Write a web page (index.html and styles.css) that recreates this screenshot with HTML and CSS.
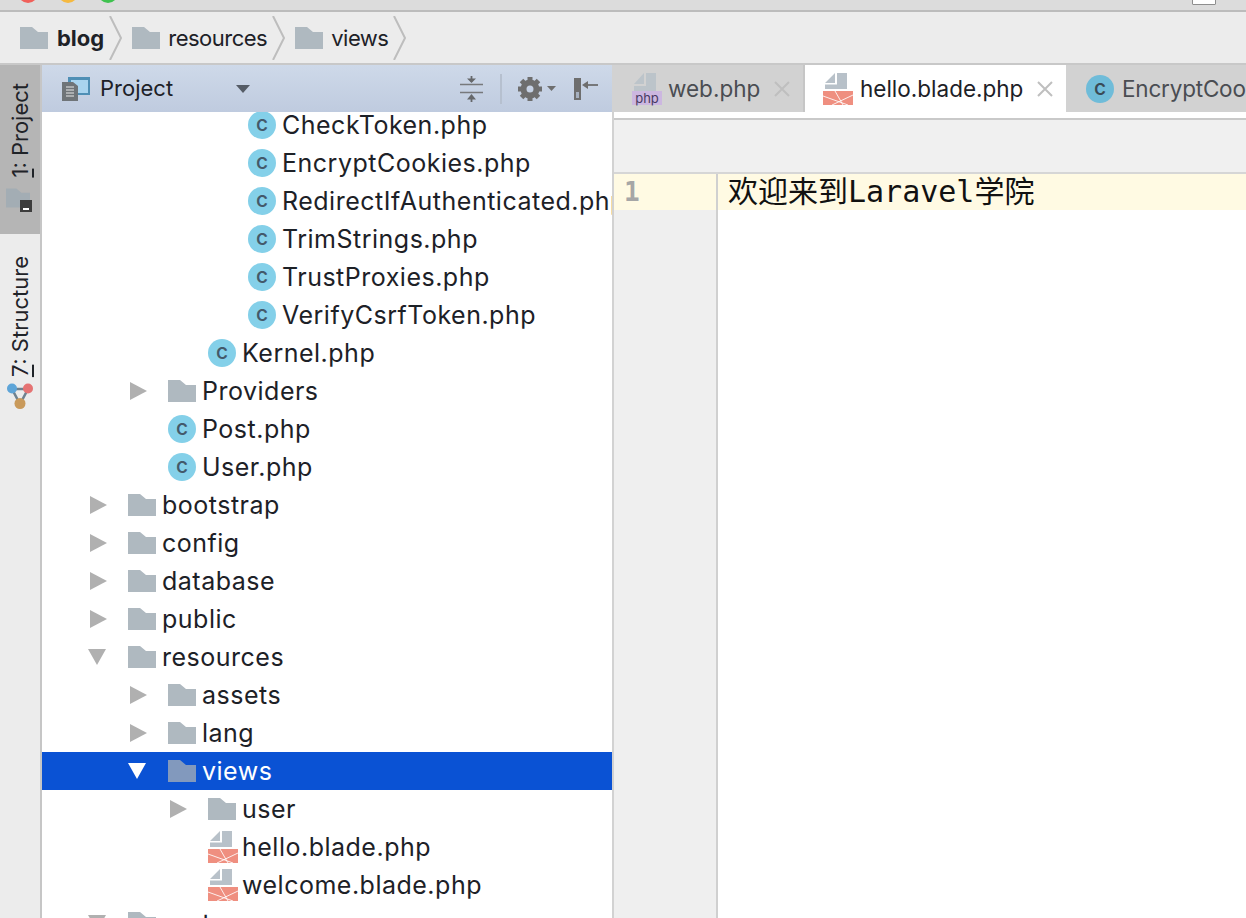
FILE: index.html
```html
<!DOCTYPE html>
<html lang="zh">
<head>
<meta charset="utf-8">
<title>blog</title>
<link rel="stylesheet" href="styles.css">
</head>
<body>
<svg class="defs" width="0" height="0">
  <symbol id="folder" viewBox="0 0 28 22"><path d="M0 0h12l6 5h10v17H0z" fill="currentColor"/></symbol>
  <symbol id="blade" viewBox="0 0 30 32">
    <path d="M2 10L12 0v10zM14 0h10v16H2v-4.500h12z" fill="#b8c1c9"/>
    <rect y="18" width="30" height="14" fill="#ef8f80"/>
    <path d="M0 23l25 9M12 18l8 14M30 22L9 32" stroke="#fff" stroke-width="1" fill="none" opacity=".85"/>
  </symbol>
  <symbol id="arrow-r" viewBox="0 0 18 18"><path d="M0 0l17 9L0 18z" fill="currentColor"/></symbol>
  <symbol id="arrow-d" viewBox="0 0 18 16"><path d="M0 0h18L9 16z" fill="currentColor"/></symbol>
  <symbol id="chev" viewBox="0 0 14 44"><path d="M1 0l11 22L1 44" fill="none" stroke="#bdbdbd" stroke-width="2"/></symbol>
  <symbol id="x" viewBox="0 0 16 16"><path d="M1 1l14 14M15 1L1 15" stroke="currentColor" stroke-width="2" fill="none"/></symbol>
</svg>
<div class="titlebar">
  <i class="light red"></i><i class="light yellow"></i><i class="light green"></i>
  <i class="tray"></i>
</div>
<nav class="crumbs">
  <svg class="ico-folder"><use href="#folder"/></svg><b class="crumb bold">blog</b><svg class="chev"><use href="#chev"/></svg>
  <svg class="ico-folder"><use href="#folder"/></svg><span class="crumb">resources</span><svg class="chev"><use href="#chev"/></svg>
  <svg class="ico-folder"><use href="#folder"/></svg><span class="crumb">views</span><svg class="chev"><use href="#chev"/></svg>
</nav>
<div class="workspace">
  <aside class="stripe">
    <div class="stripe-btn active">
      <span class="vtext"><u>1</u>: Project</span>
      <span class="stripe-folder"><svg class="ico-folder dim"><use href="#folder"/></svg><i class="mini"></i></span>
    </div>
    <div class="stripe-btn">
      <span class="vtext"><u>7</u>: Structure</span>
      <svg class="struct" viewBox="0 0 26 26" width="26" height="26">
        <path d="M5 6h16L13 21z" fill="none" stroke="#6f8290" stroke-width="2.500"/>
        <circle cx="5" cy="5.500" r="5" fill="#5ea5d8"/><circle cx="21" cy="5.500" r="5" fill="#e57373"/><circle cx="13" cy="20.500" r="5.500" fill="#c99a5b"/>
      </svg>
    </div>
  </aside>
  <section class="project">
    <header class="project-head">
      <svg class="proj-ico" viewBox="0 0 28 24" width="28" height="24">
        <rect x="6" y="0" width="22" height="18" fill="#4f8fb5"/><rect x="9" y="3" width="17" height="13" fill="#a9d4ef"/>
        <path d="M0 5h11l5 4v15H0z" fill="#6f7478"/><path d="M4 10h8M4 13h8M4 16h8M4 19h8" stroke="#e8e8e8" stroke-width="1"/>
      </svg>
      <span class="proj-title">Project</span>
      <svg class="proj-caret" viewBox="0 0 14 8" width="14" height="8"><path d="M0 0h14L7 8z" fill="#555c66"/></svg>
      <svg class="tool collapse" viewBox="0 0 23 26" width="23" height="26">
        <path d="M0 8.500h23M0 16.500h23" stroke="#77797c" stroke-width="1.500"/>
        <path d="M11.500 0v6" stroke="#66686b" stroke-width="1.800"/><path d="M7 2.500h9L11.500 7z" fill="#66686b"/>
        <path d="M11.500 26v-6" stroke="#66686b" stroke-width="1.800"/><path d="M7 23.500h9L11.500 18z" fill="#66686b"/>
      </svg>
      <i class="tool-sep"></i>
      <svg class="tool gear" viewBox="0 0 24 24" width="24" height="24">
        <circle cx="12" cy="12" r="6.500" fill="none" stroke="#6e6e6e" stroke-width="6"/>
        <path d="M12 0v24M0 12h24M3.500 3.500l17 17M20.500 3.500l-17 17" stroke="#6e6e6e" stroke-width="5" stroke-dasharray="5 14"/>
      </svg>
      <svg class="tool gear-caret" viewBox="0 0 9 5" width="9" height="5"><path d="M0 0h9L4.500 5z" fill="#6e6e6e"/></svg>
      <svg class="tool hide" viewBox="0 0 24 22" width="24" height="22">
        <rect x="1" y="1" width="5" height="20" fill="#a6b0bf" stroke="#6e6e6e" stroke-width="2"/>
        <path d="M1 1h5v13H1z" fill="#6e6e6e"/>
        <path d="M24 7H10" stroke="#6e6e6e" stroke-width="1.800"/><path d="M8 7l6-4v8z" fill="#6e6e6e"/>
      </svg>
    </header>
    <ul class="tree">
      <li class="row d3"><i class="slot"></i><i class="cls">c</i><span>CheckToken.php</span></li>
      <li class="row d3"><i class="slot"></i><i class="cls">c</i><span>EncryptCookies.php</span></li>
      <li class="row d3"><i class="slot"></i><i class="cls">c</i><span>RedirectIfAuthenticated.php</span></li>
      <li class="row d3"><i class="slot"></i><i class="cls">c</i><span>TrimStrings.php</span></li>
      <li class="row d3"><i class="slot"></i><i class="cls">c</i><span>TrustProxies.php</span></li>
      <li class="row d3"><i class="slot"></i><i class="cls">c</i><span>VerifyCsrfToken.php</span></li>
      <li class="row d2"><i class="slot"></i><i class="cls">c</i><span>Kernel.php</span></li>
      <li class="row d1"><i class="slot"><svg class="arr-r"><use href="#arrow-r"/></svg></i><svg class="ico-folder"><use href="#folder"/></svg><span>Providers</span></li>
      <li class="row d1"><i class="slot"></i><i class="cls">c</i><span>Post.php</span></li>
      <li class="row d1"><i class="slot"></i><i class="cls">c</i><span>User.php</span></li>
      <li class="row d0"><i class="slot"><svg class="arr-r"><use href="#arrow-r"/></svg></i><svg class="ico-folder"><use href="#folder"/></svg><span>bootstrap</span></li>
      <li class="row d0"><i class="slot"><svg class="arr-r"><use href="#arrow-r"/></svg></i><svg class="ico-folder"><use href="#folder"/></svg><span>config</span></li>
      <li class="row d0"><i class="slot"><svg class="arr-r"><use href="#arrow-r"/></svg></i><svg class="ico-folder"><use href="#folder"/></svg><span>database</span></li>
      <li class="row d0"><i class="slot"><svg class="arr-r"><use href="#arrow-r"/></svg></i><svg class="ico-folder"><use href="#folder"/></svg><span>public</span></li>
      <li class="row d0"><i class="slot"><svg class="arr-d"><use href="#arrow-d"/></svg></i><svg class="ico-folder"><use href="#folder"/></svg><span>resources</span></li>
      <li class="row d1"><i class="slot"><svg class="arr-r"><use href="#arrow-r"/></svg></i><svg class="ico-folder"><use href="#folder"/></svg><span>assets</span></li>
      <li class="row d1"><i class="slot"><svg class="arr-r"><use href="#arrow-r"/></svg></i><svg class="ico-folder"><use href="#folder"/></svg><span>lang</span></li>
      <li class="row d1 selected"><i class="slot"><svg class="arr-d"><use href="#arrow-d"/></svg></i><svg class="ico-folder"><use href="#folder"/></svg><span>views</span></li>
      <li class="row d2"><i class="slot"><svg class="arr-r"><use href="#arrow-r"/></svg></i><svg class="ico-folder"><use href="#folder"/></svg><span>user</span></li>
      <li class="row d2"><i class="slot"></i><svg class="ico-blade"><use href="#blade"/></svg><span>hello.blade.php</span></li>
      <li class="row d2"><i class="slot"></i><svg class="ico-blade"><use href="#blade"/></svg><span>welcome.blade.php</span></li>
      <li class="row d0"><i class="slot"><svg class="arr-d"><use href="#arrow-d"/></svg></i><svg class="ico-folder"><use href="#folder"/></svg><span>routes</span></li>
    </ul>
  </section>
  <main class="editor">
    <div class="tabs">
      <div class="tab tab-web">
        <span class="php-ico"><svg class="php-file" viewBox="0 0 22 18" width="22" height="18"><path d="M0 11L10 0v11zM12 0h10v18H0v-5h12z" fill="#bcc4ca"/></svg><i class="php-label">php</i></span>
        <span class="tab-name">web.php</span><svg class="close"><use href="#x"/></svg>
      </div>
      <div class="tab tab-hello">
        <svg class="ico-blade"><use href="#blade"/></svg>
        <span class="tab-name">hello.blade.php</span><svg class="close"><use href="#x"/></svg>
      </div>
      <div class="tab tab-enc">
        <i class="cls dimmed">c</i><span class="tab-name">EncryptCookies.php</span>
      </div>
    </div>
    <div class="crumb-space"></div>
    <div class="code">
      <div class="gutter"><div class="lineno">1</div></div>
      <div class="lines"><div class="line">欢迎来到Laravel学院</div></div>
    </div>
  </main>
</div>
</body>
</html>
```
FILE: styles.css
```css
* { box-sizing: border-box; }
html, body { margin: 0; height: 100%; }
body {
  width: 1246px; height: 918px; overflow: hidden;
  display: flex; flex-direction: column;
  background: #fff; color: #1d2127;
  font-family: Inter, "Liberation Sans", sans-serif;
  font-size: 25px;
}
i { font-style: normal; }
.defs { position: absolute; }
.titlebar {
  height: 12px; flex: none; position: relative;
  background: #dcdcdc; border-bottom: 2px solid #bcbcbc;
}
.light { position: absolute; top: -17px; width: 20px; height: 20px; border-radius: 50%; }
.red { left: 18px; background: #f0605a; }
.yellow { left: 58px; background: #f5b940; }
.green { left: 98px; background: #3fc24f; }
.tray { position: absolute; left: 1192px; top: -5px; width: 24px; height: 10px; background: #fff; border: 1px solid #8e8e8e; border-radius: 1px; }

.crumbs {
  height: 53px; flex: none; display: flex; align-items: center;
  padding: 0 0 0 20px; background: #ececec; border-bottom: 2px solid #c8c8c8;
  font-size: 22px;
}
.crumbs .ico-folder { margin-right: 8px; }
.crumb { letter-spacing: -0.500px; }
.crumb.bold { letter-spacing: 0; margin-left: 1px; }
.chev { width: 14px; height: 44px; margin: 0 9px 0 5px; }
.ico-folder { width: 28px; height: 22px; color: #afb9c0; flex: none; display: block; }

.workspace { flex: 1; min-height: 0; display: flex; }
.stripe {
  width: 42px; flex: none; background: #ececec; border-right: 2px solid #c6c6c6;
  display: flex; flex-direction: column;
}
.stripe-btn {
  display: flex; flex-direction: column; align-items: center; justify-content: flex-end;
}
.stripe-btn.active { height: 169px; background: #b5b5b5; padding-bottom: 26px; }
.stripe-btn + .stripe-btn { padding-top: 22px; }
.vtext {
  writing-mode: vertical-rl; transform: rotate(180deg);
  font-size: 22px; color: #1f2328; line-height: 22px;
}
.stripe-folder { position: relative; width: 24px; height: 20px; margin-top: 10px; margin-left: -4px; display: block; }
.stripe-folder .ico-folder { width: 24px; height: 20px; }
.ico-folder.dim { color: #a3adb4; }
.mini {
  position: absolute; right: -2px; bottom: -4px; width: 12px; height: 12px;
  background: #3d3d3d;
}
.mini::after { content: ""; position: absolute; left: 3px; right: 3px; bottom: 2px; height: 2px; background: #fff; }
.struct { margin-top: 6px; display: block; }

.project {
  width: 572px; flex: none; display: flex; flex-direction: column;
  border-right: 2px solid #d2d2d2; overflow: hidden; background: #fff;
}
.project-head {
  height: 47px; flex: none; display: flex; align-items: center;
  padding-left: 20px; background: linear-gradient(#ced9e9, #bfcbdf);
  position: relative; z-index: 1;
}
.proj-ico { flex: none; }
.proj-title { margin-left: 10px; width: 136px; font-size: 22px; margin-bottom: 1px; }
.proj-caret { flex: none; }
.tool { flex: none; display: block; }
.collapse { margin-left: 210px; }
.tool-sep { width: 2px; height: 30px; background: #b6c0cf; margin: 0 16px 0 17px; flex: none; }
.gear-caret { margin-left: 5px; }
.hide { margin-left: 18px; }

.tree { list-style: none; margin: -6px 0 0; padding: 0; letter-spacing: 0.500px; }
.row { height: 38px; display: flex; align-items: center; white-space: nowrap; }
.d0 { padding-left: 48px; }
.d1 { padding-left: 88px; }
.d2 { padding-left: 128px; }
.d3 { padding-left: 168px; }
.slot { width: 38px; flex: none; display: block; }
.row > span { margin-left: 6px; }
.arr-r { width: 18px; height: 18px; color: #b0b0b0; display: block; }
.arr-d { width: 18px; height: 16px; color: #b0b0b0; display: block; margin-left: -2px; }
.cls {
  width: 28px; height: 28px; border-radius: 50%; flex: none; display: block;
  background: #84d0e9; color: #43596a; text-align: center; letter-spacing: 0;
  font-size: 21px; font-weight: 500; line-height: 26px;
}
.ico-blade { width: 30px; height: 32px; flex: none; display: block; margin-right: -2px; }
.selected { background: #0a52d4; color: #fff; }
.selected .arr-d { color: #fff; }
.selected .ico-folder { color: #8299bd; }

.editor { flex: 1; min-width: 0; display: flex; flex-direction: column; overflow: hidden; }
.tabs { height: 55px; flex: none; display: flex; background: #fff; border-bottom: 2px solid #c9c9c9; font-size: 22.500px; }
.tab { display: flex; align-items: center; height: 47px; white-space: nowrap; overflow: hidden; background: #d2d2d2; color: #4a4d52; flex: none; }
.tab-web { width: 191px; padding-left: 18px; border-right: 2px solid #c6c6c6; }
.tab-hello { width: 261px; height: 53px; padding: 0 0 6px 18px; background: #fff; color: #1d2127; }
.tab-hello .ico-blade { margin-right: 1px; }
.tab-enc { flex: 1; padding-left: 20px; }
.tab-name { margin: 0 0 1px 6px; }
.tab-enc .tab-name { margin-left: 8px; letter-spacing: -0.200px; }
.close { width: 16px; height: 16px; margin-left: 14px; color: #bfbfbf; flex: none; display: block; }
.php-ico { width: 30px; height: 32px; display: block; position: relative; flex: none; }
.php-file { position: absolute; left: 2px; top: 0; }
.php-label { position: absolute; left: 0; bottom: 0; width: 30px; height: 14px; background: #ccb7e0; color: #473a63; font-size: 13px; line-height: 14px; text-align: center; }
.dimmed { background: #6fbcd9; color: #3a4a55; }
.crumb-space { height: 54px; flex: none; background: #f0f0f0; border-bottom: 2px solid #d6d6d6; }
.code { flex: 1; display: flex; min-height: 0; font-family: "DejaVu Sans Mono", "Noto Sans CJK SC", monospace; font-size: 30px; }
.gutter { width: 104px; flex: none; background: #efefef; border-right: 2px solid #d0d0d0; }
.lineno { height: 36px; line-height: 36px; padding-left: 10px; background: #fffae3; color: #a6a6a6; font-size: 26px; font-weight: bold; }
.lines { flex: 1; }
.line { height: 36px; line-height: 36px; padding-left: 10px; background: #fffae3; color: #111; white-space: nowrap; }
```
